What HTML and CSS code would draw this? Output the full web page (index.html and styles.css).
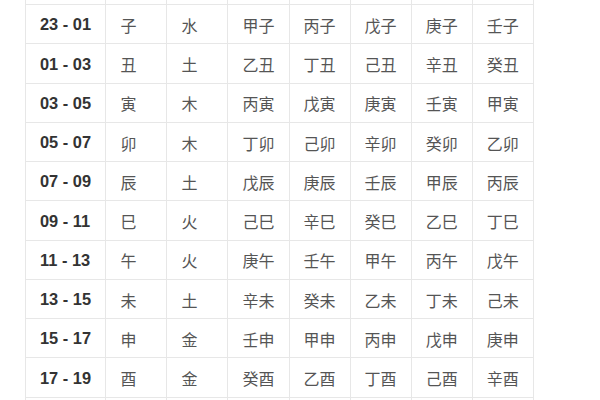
FILE: index.html
```html
<!DOCTYPE html>
<html lang="zh-CN">
<head>
<meta charset="utf-8">
<title>时辰天干地支表</title>
<link rel="stylesheet" href="styles.css">
</head>
<body>
<div class="page">
  <div class="table">
    <div class="row head"><div class="cell"></div><div class="cell"></div><div class="cell"></div><div class="cell"></div><div class="cell"></div><div class="cell"></div><div class="cell"></div><div class="cell"></div></div>
    <div class="row"><div class="cell time">23 - 01</div><div class="cell">子</div><div class="cell">水</div><div class="cell">甲子</div><div class="cell">丙子</div><div class="cell">戊子</div><div class="cell">庚子</div><div class="cell">壬子</div></div>
    <div class="row"><div class="cell time">01 - 03</div><div class="cell">丑</div><div class="cell">土</div><div class="cell">乙丑</div><div class="cell">丁丑</div><div class="cell">己丑</div><div class="cell">辛丑</div><div class="cell">癸丑</div></div>
    <div class="row"><div class="cell time">03 - 05</div><div class="cell">寅</div><div class="cell">木</div><div class="cell">丙寅</div><div class="cell">戊寅</div><div class="cell">庚寅</div><div class="cell">壬寅</div><div class="cell">甲寅</div></div>
    <div class="row"><div class="cell time">05 - 07</div><div class="cell">卯</div><div class="cell">木</div><div class="cell">丁卯</div><div class="cell">己卯</div><div class="cell">辛卯</div><div class="cell">癸卯</div><div class="cell">乙卯</div></div>
    <div class="row"><div class="cell time">07 - 09</div><div class="cell">辰</div><div class="cell">土</div><div class="cell">戊辰</div><div class="cell">庚辰</div><div class="cell">壬辰</div><div class="cell">甲辰</div><div class="cell">丙辰</div></div>
    <div class="row"><div class="cell time">09 - 11</div><div class="cell">巳</div><div class="cell">火</div><div class="cell">己巳</div><div class="cell">辛巳</div><div class="cell">癸巳</div><div class="cell">乙巳</div><div class="cell">丁巳</div></div>
    <div class="row"><div class="cell time">11 - 13</div><div class="cell">午</div><div class="cell">火</div><div class="cell">庚午</div><div class="cell">壬午</div><div class="cell">甲午</div><div class="cell">丙午</div><div class="cell">戊午</div></div>
    <div class="row"><div class="cell time">13 - 15</div><div class="cell">未</div><div class="cell">土</div><div class="cell">辛未</div><div class="cell">癸未</div><div class="cell">乙未</div><div class="cell">丁未</div><div class="cell">己未</div></div>
    <div class="row"><div class="cell time">15 - 17</div><div class="cell">申</div><div class="cell">金</div><div class="cell">壬申</div><div class="cell">甲申</div><div class="cell">丙申</div><div class="cell">戊申</div><div class="cell">庚申</div></div>
    <div class="row"><div class="cell time">17 - 19</div><div class="cell">酉</div><div class="cell">金</div><div class="cell">癸酉</div><div class="cell">乙酉</div><div class="cell">丁酉</div><div class="cell">己酉</div><div class="cell">辛酉</div></div>
    <div class="row tail"><div class="cell"></div><div class="cell"></div><div class="cell"></div><div class="cell"></div><div class="cell"></div><div class="cell"></div><div class="cell"></div><div class="cell"></div></div>
  </div>
</div>
</body>
</html>
```

FILE: styles.css
```css
html, body {
  margin: 0;
  padding: 0;
  background: #ffffff;
}

.page {
  width: 600px;
  height: 400px;
  overflow: hidden;
}

.table {
  margin-top: -34.06px;
  margin-left: 25px;
  width: 509.75px;
  border-left: 1px solid #e7e7e7;
}

.row {
  display: grid;
  grid-template-columns: 80.4px repeat(7, 61.05px);
  height: 39.26px;
}

.cell {
  box-sizing: border-box;
  display: flex;
  align-items: center;
  padding: 1px 0 0 14px;
  border-right: 1px solid #e7e7e7;
  border-bottom: 1px solid #e7e7e7;
  font-family: "Noto Sans CJK SC", "Noto Sans", sans-serif;
  font-size: 16px;
  color: #555555;
  white-space: nowrap;
}

.time {
  font-family: "Liberation Sans", Arial, sans-serif;
  font-size: 16.4px;
  font-weight: bold;
  color: #333333;
}
```
